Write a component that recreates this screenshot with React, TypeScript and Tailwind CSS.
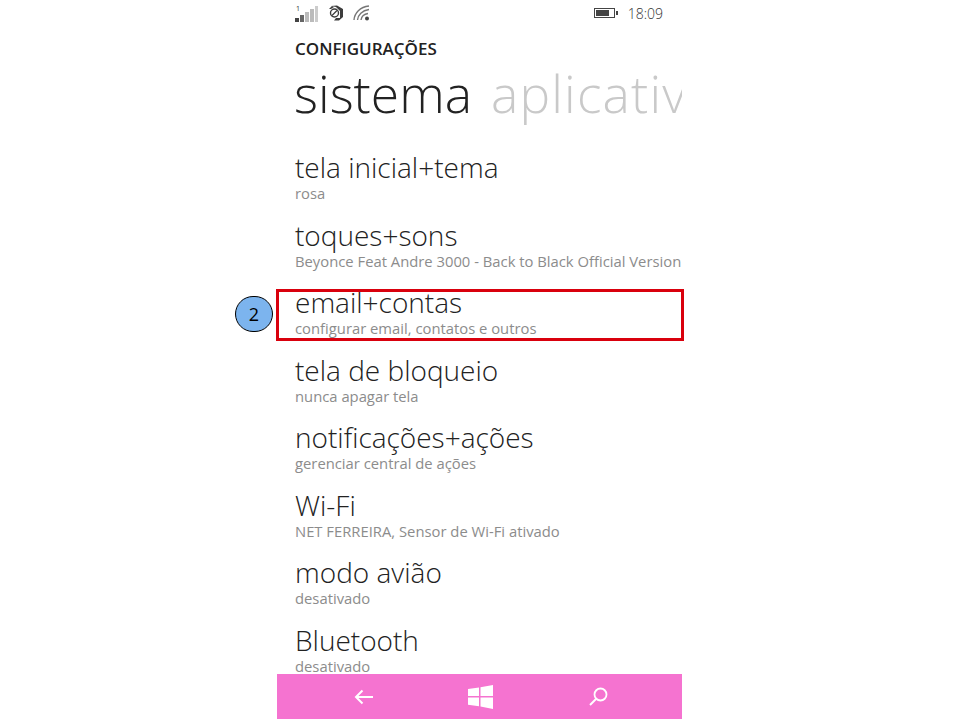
const ROWS = [
  { title: 'tela inicial+tema', sub: 'rosa' },
  { title: 'toques+sons', sub: 'Beyonce Feat Andre 3000 - Back to Black Official Version' },
  { title: 'email+contas', sub: 'configurar email, contatos e outros' },
  { title: 'tela de bloqueio', sub: 'nunca apagar tela' },
  { title: 'notificações+ações', sub: 'gerenciar central de ações' },
  { title: 'Wi-Fi', sub: 'NET FERREIRA, Sensor de Wi-Fi ativado' },
  { title: 'modo avião', sub: 'desativado' },
  { title: 'Bluetooth', sub: 'desativado' },
]

const SignalIcon = () => (
  <svg width="24" height="18" viewBox="0 0 24 18" className="block">
    <text x="1" y="7" fontSize="7" fill="#333" fontFamily="'Open Sans', sans-serif">1</text>
    <rect x="0" y="14" width="4" height="4" fill="#444" />
    <rect x="5" y="11" width="4" height="7" fill="#666" />
    <rect x="10" y="8" width="4" height="10" fill="#bbb" />
    <rect x="15" y="5" width="4" height="13" fill="#bbb" />
    <rect x="20" y="2" width="3" height="16" fill="#ccc" />
  </svg>
)

const SyncIcon = () => (
  <svg width="16" height="16" viewBox="0 0 16 16" className="block">
    <path d="M3 1 L9 0.5 L15 4 V12 L11 15.5 H6 L8 13 H12 V6 L8 2 Z" fill="#3d3d3d" />
    <path d="M1 4 L4 1 L6 2 L3 4 Z" fill="#3d3d3d" />
    <circle cx="6.5" cy="8" r="4" fill="none" stroke="#3d3d3d" strokeWidth="1.4" />
    <path d="M4 10.5 L9 5.5" stroke="#3d3d3d" strokeWidth="1.2" />
  </svg>
)

const WifiIcon = () => (
  <svg width="18" height="16" viewBox="0 0 18 16" fill="none" className="block">
    <path d="M1 15 C1.5 8 7 2 16 1" stroke="#777" strokeWidth="1.4" />
    <path d="M4.5 15 C5 10 9 5.5 16 4.5" stroke="#777" strokeWidth="1.4" />
    <path d="M8 15 C8.5 12 11 9 15 8.5" stroke="#777" strokeWidth="1.4" />
    <circle cx="14" cy="13.5" r="2" fill="#444" />
  </svg>
)

const BatteryIcon = () => (
  <svg width="24" height="10" viewBox="0 0 24 10" className="block">
    <rect x="0.5" y="0.5" width="20" height="9" fill="none" stroke="#444" />
    <rect x="2" y="2" width="13" height="6" fill="#444" />
    <rect x="22" y="3" width="2" height="4" fill="#444" />
  </svg>
)

const BackIcon = () => (
  <svg width="20" height="16" viewBox="0 0 20 16" fill="none" className="block">
    <path d="M19 8 H2 M8.5 1.5 L2 8 L8.5 14.5" stroke="#fff" strokeWidth="2" />
  </svg>
)

const WindowsIcon = () => (
  <svg width="25" height="24" viewBox="0 0 25 24" className="block">
    <path d="M0 4 L11 2.4 V11 H0 Z M12.5 2.2 L25 0 V11 H12.5 Z M0 12.5 H11 V21.3 L0 19.7 Z M12.5 12.5 H25 V24 L12.5 21.6 Z" fill="#fff" />
  </svg>
)

const SearchIcon = () => (
  <svg width="19" height="19" viewBox="0 0 19 19" fill="none" className="block">
    <circle cx="11.5" cy="7.5" r="6" stroke="#fff" strokeWidth="1.8" />
    <path d="M7 12 L1 18" stroke="#fff" strokeWidth="2" />
  </svg>
)

export default function App() {
  return (
    <div className="relative w-[960px] h-[720px] bg-white overflow-hidden font-['Open_Sans',sans-serif]">
      <div className="ml-[277px] w-[405px] h-[719px] flex flex-col">
        <div className="h-[26px] flex items-center pl-[18px] pr-[19px] shrink-0">
          <SignalIcon />
          <div className="ml-[9px]"><SyncIcon /></div>
          <div className="ml-[9px]"><WifiIcon /></div>
          <div className="ml-auto"><BatteryIcon /></div>
          <span className="ml-[10px] text-[14px] font-light text-[#333]">18:09</span>
        </div>

        <div className="pl-[18px] mt-[12px] text-[17px] leading-[22px] font-semibold text-[#222] shrink-0">CONFIGURAÇÕES</div>

        <div className="pl-[17px] mt-[1px] h-[64px] flex items-baseline gap-[19px] overflow-hidden whitespace-nowrap font-light text-[51.5px] leading-[64px] shrink-0">
          <span className="text-[#222]">sistema</span>
          <span className="text-[#c9c9c9] tracking-[1.2px]">aplicativos</span>
        </div>

        <div className="flex-1 min-h-0 overflow-hidden pt-[25px] pl-[18px]">
          {ROWS.map(row => (
            <div key={row.title} className="h-[67.5px] whitespace-nowrap">
              <div className="text-[28px] leading-[35px] font-light text-[#222]">{row.title}</div>
              <div className="text-[14.8px] leading-[16px] text-[#8c8c8c]">{row.sub}</div>
            </div>
          ))}
        </div>

        <div className="h-[45px] shrink-0 bg-[#f573d0] flex items-center pl-[77px]">
          <BackIcon />
          <div className="ml-[94px]"><WindowsIcon /></div>
          <div className="ml-[96px]"><SearchIcon /></div>
        </div>
      </div>

      {/* callout over the list */}
      <div className="absolute left-[276px] top-[289px] w-[408px] h-[52px] border-[3px] border-[#d9000d]" />
      <div className="absolute left-[235px] top-[296px] w-[38px] h-[36px] rounded-full bg-[#7cb4ee] border border-black flex items-center justify-center text-[18px] text-black">2</div>
    </div>
  )
}
